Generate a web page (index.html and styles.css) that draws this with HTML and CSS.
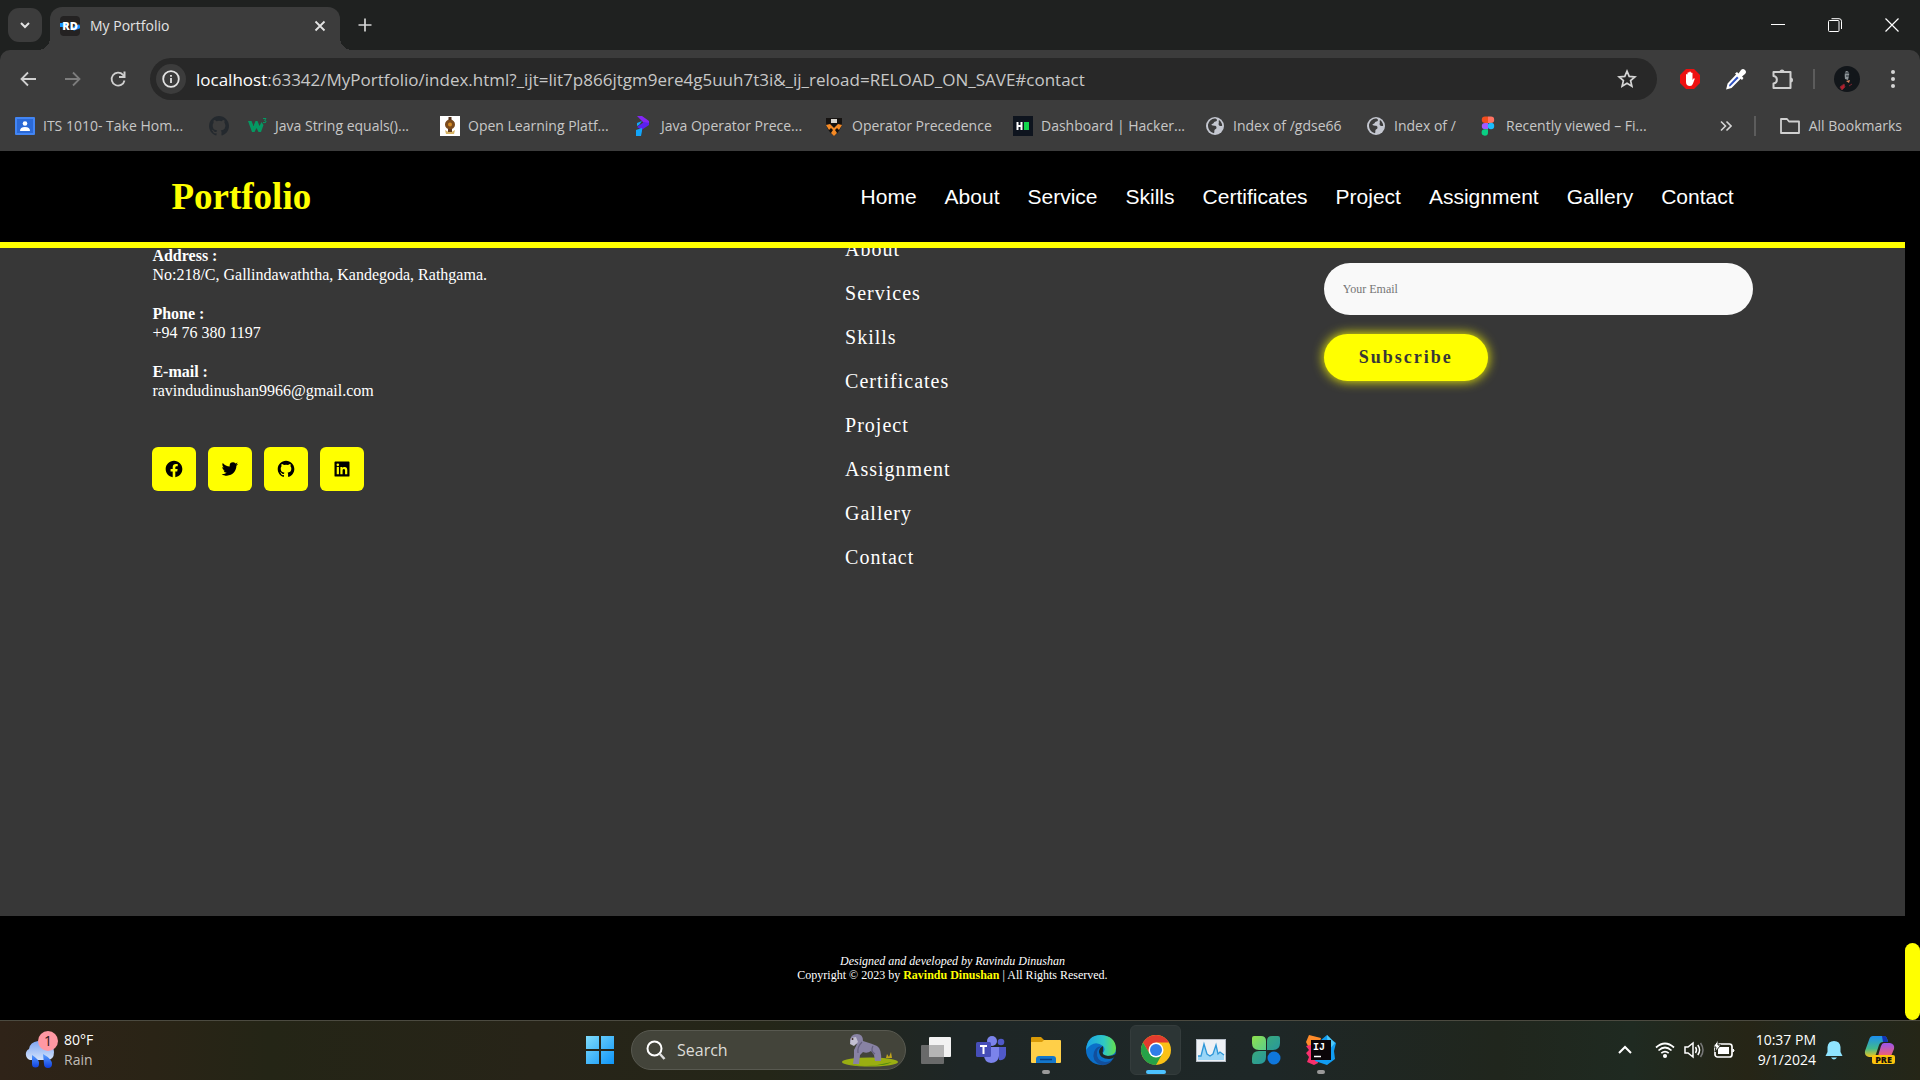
FILE: index.html
```html
<!DOCTYPE html>
<html lang="en">
<head>
<meta charset="utf-8">
<title>My Portfolio</title>
<link rel="stylesheet" href="styles.css">
</head>
<body>
<svg class="defs" aria-hidden="true">
  <symbol id="github" viewBox="0 0 24 24"><path fill="currentColor" d="M12.026 2c-5.509 0-9.974 4.465-9.974 9.974 0 4.406 2.857 8.145 6.821 9.465.499.09.679-.217.679-.481 0-.237-.008-.865-.011-1.696-2.775.602-3.361-1.338-3.361-1.338-.452-1.152-1.107-1.459-1.107-1.459-.905-.619.069-.605.069-.605 1.002.07 1.527 1.028 1.527 1.028.89 1.524 2.336 1.084 2.902.829.091-.645.351-1.085.635-1.334-2.214-.251-4.542-1.107-4.542-4.93 0-1.087.389-1.979 1.024-2.675-.101-.253-.446-1.268.099-2.64 0 0 .837-.269 2.742 1.021a9.582 9.582 0 0 1 2.496-.336 9.554 9.554 0 0 1 2.496.336c1.906-1.291 2.742-1.021 2.742-1.021.545 1.372.203 2.387.099 2.64.64.696 1.024 1.587 1.024 2.675 0 3.833-2.33 4.675-4.552 4.922.355.308.675.916.675 1.846 0 1.334-.012 2.41-.012 2.737 0 .267.178.577.687.479C19.146 20.115 22 16.379 22 11.974 22 6.465 17.535 2 12.026 2z"/></symbol>
  <symbol id="globe" viewBox="0 0 20 20"><circle cx="10" cy="10" r="9" fill="#c4c7d0"/><path fill="#3c3c3c" d="M3 8.500C4 5 6.500 2.800 9.500 2.600c1.500 0 2.500.600 2.500 1.500 0 1.200-1.300 1.400-2.300 1.700-.8.300-.7 1.200-1.500 1.700-.7.500-1.700.400-1.700 1.200 0 1.200 2.500.700 3.700 1.100 1.200.400 1.600 1.600 1.100 2.600-.5.900-1.700.800-1.900 1.900-.1.800.1 1.900-.4 2.900C5.600 16.600 2.700 13.500 3 8.500zM14 4c1.800 1.200 3.200 3.300 3.200 5.700-.9.500-2.300.400-3-.3-.8-.8-.7-1.800-.4-2.500.3-.8-.5-1.600.2-2.900z"/></symbol>
</svg>

<div class="tabs">
  <button class="tab-search" aria-label="Search tabs"><svg width="12" height="12" viewBox="0 0 12 12"><path d="M2 4l4 4 4-4" fill="none" stroke="#e3e3e3" stroke-width="2"/></svg></button>
  <div class="tab">
    <svg width="20" height="20" viewBox="0 0 20 20"><rect width="20" height="20" rx="4" fill="#242222"/><path d="M0 9h8M13 13l7-3" stroke="#1492ff" stroke-width="4"/><text x="10" y="14" text-anchor="middle" font-size="11" class="glyph">RD</text></svg>
    <span class="tab-title">My Portfolio</span>
    <button class="icon-btn" aria-label="Close tab"><svg width="12" height="12" viewBox="0 0 12 12"><path d="M1.500 1.500l9 9M10.500 1.500l-9 9" stroke="#e3e3e3" stroke-width="1.800"/></svg></button>
  </div>
  <button class="icon-btn new-tab" aria-label="New tab"><svg width="14" height="14" viewBox="0 0 14 14"><path d="M7 .5v13M.5 7h13" stroke="#d5d5d5" stroke-width="1.700"/></svg></button>
  <div class="window-controls">
    <button class="icon-btn" aria-label="Minimize"><svg width="14" height="14" viewBox="0 0 14 14"><path d="M0 6.500h14" stroke="#fff"/></svg></button>
    <button class="icon-btn" aria-label="Restore"><svg width="14" height="14" viewBox="0 0 14 14" fill="none" stroke="#fff"><rect x=".5" y="2.500" width="10.500" height="11" rx="1"/><path d="M3.500.7H11a2.500 2.500 0 0 1 2.500 2.500V11"/></svg></button>
    <button class="icon-btn" aria-label="Close"><svg width="14" height="14" viewBox="0 0 14 14"><path d="M.5.5l13 13M13.500.5l-13 13" stroke="#fff" stroke-width="1.200"/></svg></button>
  </div>
</div>

<div class="toolbar-wrap">
<div class="toolbar">
  <button class="icon-btn" aria-label="Back"><svg width="18" height="18" viewBox="0 0 18 18"><path d="M17 9H2.500M9 2.500L2.500 9l6.500 6.500" fill="none" stroke="#d0d0d0" stroke-width="1.800"/></svg></button>
  <button class="icon-btn" aria-label="Forward"><svg width="18" height="18" viewBox="0 0 18 18"><path d="M1 9h14.500M9 2.500L15.500 9 9 15.500" fill="none" stroke="#7d7d7d" stroke-width="1.800"/></svg></button>
  <button class="icon-btn" aria-label="Reload"><svg width="18" height="18" viewBox="0 0 18 18"><path d="M15.500 10.500A6.500 6.500 0 1 1 14 4.800l1 1.200" fill="none" stroke="#d0d0d0" stroke-width="1.800"/><path d="M16.500 1.500V8H10V6h4.500V1.500z" fill="#d0d0d0"/></svg></button>
  <div class="address-bar">
    <button class="site-info" aria-label="Site information"><svg width="18" height="18" viewBox="0 0 18 18"><circle cx="9" cy="9" r="7.800" fill="none" stroke="#e3e3e3" stroke-width="1.800"/><path d="M9 8v5M9 5v1.800" stroke="#e3e3e3" stroke-width="1.800"/></svg></button>
    <div class="url"><span class="host">localhost</span>:63342/MyPortfolio/index.html?_ijt=lit7p866jtgm9ere4g5uuh7t3i&amp;_ij_reload=RELOAD_ON_SAVE#contact</div>
    <button class="icon-btn star" aria-label="Bookmark this page"><svg width="20" height="20" viewBox="0 0 20 20"><path d="M10 2.200l2.200 5.200 5.700.500-4.300 3.700 1.300 5.600L10 14.200l-4.900 3 1.300-5.600L2.100 7.900l5.700-.5z" fill="none" stroke="#d5d5d5" stroke-width="1.700"/></svg></button>
  </div>
  <button class="icon-btn ext" aria-label="Ad blocker"><svg width="22" height="22" viewBox="0 0 22 22"><path d="M7 1h8l6 6v8l-6 6H7l-6-6V7z" fill="#ed1010"/><path d="M7 11V6.500q.8-1 1.500 0V10V4.800q.9-1 1.700 0V9V4q.9-1 1.700 0v5V5q.9-1 1.600 0v7l1-1.500q1-.5 1.300.3l-1.800 4.700Q13.200 18 11 18q-4 0-4-4z" fill="#fff"/></svg></button>
  <button class="icon-btn ext" aria-label="Color picker"><svg width="22" height="22" viewBox="0 0 22 22"><path d="M12 7l3 3-9 9-3.500 1 1-4z" fill="#2c4fc0" stroke="#fff" stroke-width="2"/><path d="M10 5.500l2-1.500 1.500 1.500L16 2q2-2 4 0t0 4l-3 2.500 1.500 1.500-1.500 2z" fill="#fff"/></svg></button>
  <button class="icon-btn ext" aria-label="Extensions"><svg width="22" height="22" viewBox="0 0 22 22"><path d="M2.500 4h17v16h-17v-4.500c4.500-.5 4.500-7 0-7.500z" fill="none" stroke="#d0d0d0" stroke-width="2" stroke-linejoin="round"/><path d="M8.500 4a2.500 2.500 0 0 1 5 0zM19.500 9.500a2.500 2.500 0 0 1 0 5z" fill="#d0d0d0"/></svg></button>
  <span class="bar-divider"></span>
  <button class="icon-btn profile" aria-label="Profile"><svg width="26" height="26" viewBox="0 0 26 26"><circle cx="13" cy="13" r="13" fill="#12161a"/><path d="M12 5q4 0 3 5l-1 4-3-1q-1-6 1-8z" fill="#8d9498"/><path d="M12 15l4-1-1 3z" fill="#d9825c"/><path d="M6 21l4-3 1 3-3 3zM15 20l3-2" fill="#b51e2c" stroke="#7a2630"/><path d="M11 7h4M12 10h3" stroke="#252b30"/></svg></button>
  <button class="icon-btn menu" aria-label="Menu"><svg width="6" height="20" viewBox="0 0 6 20" fill="#d5d5d5"><circle cx="3" cy="3" r="2"/><circle cx="3" cy="10" r="2"/><circle cx="3" cy="17" r="2"/></svg></button>
</div>
</div>

<div class="bookmarks">
  <nav class="bookmark-list" aria-label="Bookmarks">
    <a href="#"><svg width="20" height="20" viewBox="0 0 20 20"><rect y="1" width="20" height="18" rx="1" fill="#4285f4"/><rect x="2" y="3" width="16" height="14" fill="#2b69d6"/><circle cx="10" cy="7.500" r="2.300" fill="#fff"/><path d="M5 15q0-4 5-4t5 4z" fill="#fff"/></svg>ITS 1010- Take Hom...</a>
    <a href="#" aria-label="GitHub"><svg class="gh" width="24" height="24"><use href="#github"/></svg></a>
    <a href="#"><svg width="20" height="20" viewBox="0 0 20 20"><path d="M1 5h3.500l2 5 2-5h2l2 5 2-4 2 3-2.500 7h-2.500l-2-4-2 4H5z" fill="#059862"/><path d="M16 2.500h3l-1.500 2q2 0 1.500 1.500-.5 1-3 .5" fill="none" stroke="#059862"/></svg>Java String equals()...</a>
    <a href="#"><svg width="20" height="20" viewBox="0 0 20 20"><rect width="20" height="20" fill="#fff"/><circle cx="10" cy="8.500" r="5" fill="#7a4a1c"/><circle cx="10" cy="8.500" r="2" fill="#d28a25"/><path d="M8.500 1h3v3h-3z" fill="#51301a"/><path d="M5 14q5 4 10 0l-1 4H6z" fill="#d8b465"/><path d="M8 13h4v3H8z" fill="#5f3a20"/></svg>Open Learning Platf...</a>
    <a href="#"><svg width="20" height="20" viewBox="0 0 20 20"><path d="M4 0h5l7 5v3l-4 3-1-4z" fill="#8426f5"/><path d="M4 11l7-5 5 1v2l-6 4-1 1z" fill="#5a20f0"/><path d="M3 14l6-2v3l-1 5H3zM4 7l5-2-3 4-2 1z" fill="#12a5fa"/></svg>Java Operator Prece...</a>
    <a href="#"><svg width="20" height="20" viewBox="0 0 20 20"><path d="M2 2h16v5q-1 8-8 13Q3 15 2 7z" fill="#161311"/><path d="M7 3h6v4H7z" fill="#d5d2cc"/><path d="M2 9l4-1 4 4 4-4 4 1-3 5-2-2-2 2 2 3-3 3-3-3 2-3-2-2-2 2z" fill="#f58a25"/></svg>Operator Precedence</a>
    <a href="#"><svg width="20" height="20" viewBox="0 0 20 20"><rect width="20" height="20" fill="#0e141e"/><path d="M4.500 6v8M8.500 6v8M4 10h5" stroke="#fff" stroke-width="2"/><rect x="11" y="6" width="5" height="8" fill="#12d64c"/></svg>Dashboard | Hacker...</a>
    <a href="#"><svg width="20" height="20"><use href="#globe"/></svg>Index of /gdse66</a>
    <a href="#"><svg width="20" height="20"><use href="#globe"/></svg>Index of /</a>
    <a href="#"><svg width="20" height="20" viewBox="0 0 20 20"><path d="M10 .5H7a3.200 3.200 0 0 0 0 6.400h3z" fill="#f24e1e"/><path d="M10 .5h3a3.200 3.200 0 0 1 0 6.400h-3z" fill="#ff7262"/><path d="M10 6.900H7a3.200 3.200 0 0 0 0 6.400h3z" fill="#a259ff"/><circle cx="13" cy="10" r="3.200" fill="#1abcfe"/><path d="M10 13.300H7a3.200 3.200 0 1 0 3 3.200z" fill="#0acf83"/></svg>Recently viewed – Fi...</a>
  </nav>
  <button class="icon-btn more" aria-label="More bookmarks"><svg width="12" height="12" viewBox="0 0 12 12"><path d="M1 1.500L5.500 6 1 10.500M6.500 1.500L11 6l-4.500 4.500" fill="none" stroke="#d5d5d5" stroke-width="1.600"/></svg></button>
  <span class="bar-divider"></span>
  <a href="#" class="all"><svg width="20" height="20" viewBox="0 0 20 20"><path d="M1 3h6l2 2.500h10V17H1z" fill="none" stroke="#d0d0d0" stroke-width="1.800" stroke-linejoin="round"/></svg>All Bookmarks</a>
</div>

<div class="viewport">
  <div class="page">
    <header class="site-header">
      <a class="logo" href="#">Portfolio</a>
      <nav class="site-nav">
        <a href="#">Home</a><a href="#">About</a><a href="#">Service</a><a href="#">Skills</a><a href="#">Certificates</a><a href="#">Project</a><a href="#">Assignment</a><a href="#">Gallery</a><a href="#">Contact</a>
      </nav>
    </header>
    <main class="contact">
      <section class="details">
        <p><b>Address :</b><br>No:218/C, Gallindawaththa, Kandegoda, Rathgama.</p>
        <p><b>Phone :</b><br>+94 76 380 1197</p>
        <p><b>E-mail :</b><br>ravindudinushan9966@gmail.com</p>
        <div class="social">
          <a href="#" aria-label="Facebook"><svg width="20" height="20" viewBox="0 0 24 24"><path d="M12.001 2.002c-5.522 0-9.999 4.477-9.999 9.999 0 4.990 3.656 9.126 8.437 9.879v-6.988h-2.540v-2.891h2.540V9.798c0-2.508 1.493-3.891 3.776-3.891 1.094 0 2.240.195 2.240.195v2.459h-1.264c-1.240 0-1.628.772-1.628 1.563v1.875h2.771l-.443 2.891h-2.328v6.988C18.344 21.129 22 16.992 22 12.001c0-5.522-4.477-9.999-9.999-9.999z"/></svg></a>
          <a href="#" aria-label="Twitter"><svg width="20" height="20" viewBox="0 0 24 24"><path d="M19.633 7.997c.013.175.013.349.013.523 0 5.325-4.053 11.461-11.460 11.461-2.282 0-4.402-.661-6.186-1.809.324.037.636.050.973.050a8.070 8.070 0 0 0 5.001-1.721 4.036 4.036 0 0 1-3.767-2.793c.249.037.499.062.761.062.361 0 .724-.050 1.061-.137a4.027 4.027 0 0 1-3.230-3.953v-.050c.537.299 1.160.486 1.820.511a4.022 4.022 0 0 1-1.796-3.354c0-.748.199-1.434.548-2.032a11.457 11.457 0 0 0 8.306 4.215c-.062-.3-.1-.611-.1-.923a4.026 4.026 0 0 1 4.028-4.028c1.160 0 2.207.486 2.943 1.272a7.957 7.957 0 0 0 2.556-.973 4.020 4.020 0 0 1-1.771 2.220 8.073 8.073 0 0 0 2.319-.624 8.645 8.645 0 0 1-2.019 2.083z"/></svg></a>
          <a href="#" aria-label="GitHub"><svg width="20" height="20"><use href="#github"/></svg></a>
          <a href="#" aria-label="LinkedIn"><svg width="20" height="20" viewBox="0 0 24 24"><path d="M20 3H4a1 1 0 0 0-1 1v16a1 1 0 0 0 1 1h16a1 1 0 0 0 1-1V4a1 1 0 0 0-1-1zM8.339 18.337H5.667v-8.590h2.672v8.590zM7.003 8.574a1.548 1.548 0 1 1 0-3.096 1.548 1.548 0 0 1 0 3.096zm11.335 9.763h-2.669V14.160c0-.996-.018-2.277-1.388-2.277-1.390 0-1.601 1.086-1.601 2.207v4.248h-2.667v-8.590h2.560v1.174h.037c.355-.675 1.227-1.387 2.524-1.387 2.704 0 3.203 1.778 3.203 4.092v4.710z"/></svg></a>
        </div>
      </section>
      <ul class="links">
        <li><a href="#">About</a></li><li><a href="#">Services</a></li><li><a href="#">Skills</a></li><li><a href="#">Certificates</a></li><li><a href="#">Project</a></li><li><a href="#">Assignment</a></li><li><a href="#">Gallery</a></li><li><a href="#">Contact</a></li>
      </ul>
      <form class="newsletter">
        <input type="email" placeholder="Your Email" aria-label="Your Email">
        <button type="button">Subscribe</button>
      </form>
    </main>
    <footer class="site-footer">
      <i>Designed and developed by Ravindu Dinushan</i>
      <span>Copyright © 2023 by <b>Ravindu Dinushan</b> | All Rights Reserved.</span>
    </footer>
  </div>
  <div class="scrollbar"><div class="thumb"></div></div>
</div>

<div class="taskbar">
  <div class="weather">
    <svg width="36" height="38" viewBox="0 0 36 38"><defs><linearGradient id="cl" x1="0" y1="0" x2="0" y2="1"><stop offset="0" stop-color="#7ea5f2"/><stop offset="1" stop-color="#d3e2fb"/></linearGradient><linearGradient id="dr" x1="0" y1="0" x2="0" y2="1"><stop offset="0" stop-color="#5aa0ff"/><stop offset="1" stop-color="#0f3fe0"/></linearGradient></defs><path d="M6 29a6 6 0 0 1-1-11q1-7 9-8h9q7 3 7 11 0 8-7 8z" fill="url(#cl)"/><path d="M8 24q8 5 7 9a3.500 3.500 0 0 1-7 0zM19 23q9 5 9 10a4 4 0 0 1-8 0z" fill="url(#dr)"/><circle cx="24" cy="10" r="10" fill="#ff98a3"/><text x="24" y="15" text-anchor="middle" font-size="14" class="badge">1</text></svg>
    <div>80°F<br><span class="dim">Rain</span></div>
  </div>
  <div class="apps">
    <button class="app" aria-label="Start"><svg width="30" height="30" viewBox="0 0 30 30"><defs><linearGradient id="win" x1="0" y1="0" x2="1" y2="1"><stop offset="0" stop-color="#7fdcfb"/><stop offset="1" stop-color="#0e95f8"/></linearGradient></defs><path fill="url(#win)" d="M1 1h13v13H1zM16 1h13v13H16zM1 16h13v13H1zM16 16h13v13H16z"/></svg></button>
    <button class="search"><svg width="20" height="20" viewBox="0 0 20 20"><circle cx="8.500" cy="8.500" r="7" fill="none" stroke="#fff" stroke-width="2"/><path d="M13.500 13.500L18.500 19" stroke="#ddd" stroke-width="2.500"/></svg><span>Search</span>
      <svg class="gorilla" width="56" height="34" viewBox="0 0 56 34"><ellipse cx="28" cy="29" rx="28" ry="4.500" fill="#9aae12"/><path d="M6 31q22 4 44-2-10 6-44 2z" fill="#4d8a10"/><path d="M44 25l1-4 2 3 2-5 1 6" fill="#c3a51c"/><path d="M8 9q0-8 7-8 6 0 6 7 10 3 14 5 5 3 4 15h-6l-1-6-3-4q-4 3-8 1l-3 3-1 9h-6l1-8 0-6 3-6q-5 1-7-2z" fill="#8882a4"/><path d="M20 9q-5 5-4 11M31 13q-3 5 2 8" fill="none" stroke="#65607f" stroke-width="1.200"/><path d="M9 5l5-1 2 5-4 4-4-2z" fill="#c3c0d2"/><circle cx="10.500" cy="6" r="1" fill="#402c2c"/></svg></button>
    <button class="app" aria-label="Task view"><svg width="32" height="32" viewBox="0 0 32 32"><rect x="9" y="3" width="22" height="20" rx="1" fill="#f2f2f2"/><rect x="1" y="11" width="23" height="19" rx="1" fill="#777" opacity=".85"/><path d="M9 11h15v12H9z" fill="#b5b5b5"/></svg></button>
    <button class="app" aria-label="Teams"><svg width="32" height="32" viewBox="0 0 32 32"><circle cx="17" cy="7" r="5" fill="#7b83eb"/><circle cx="26" cy="8" r="3.300" fill="#5059c9"/><path d="M22 13h9v8q-1 6-7 5z" fill="#5059c9"/><path d="M9 13h15v9q-1 7-8 7-7-1-7-8z" fill="#7b83eb"/><rect x="1" y="8" width="15" height="15" rx="1.500" fill="#464eb8"/><path d="M5 12h7M8.500 12v8" stroke="#fff" stroke-width="2"/></svg></button>
    <button class="app open" aria-label="File Explorer"><svg width="32" height="32" viewBox="0 0 32 32"><path d="M1 4q0-1 1-1h9l3 3h0v6H1z" fill="#d99a07"/><path d="M1 8h11l2-2h16q1 0 1 1v21q0 1-1 1H2q-1 0-1-1z" fill="#ffcf48"/><path d="M6 29v-4q0-3 3-3h14q3 0 3 3v4z" fill="#1477cb"/><path d="M10 25.500h12" stroke="#073e83" stroke-width="1.500"/></svg></button>
    <button class="app" aria-label="Edge"><svg width="32" height="32" viewBox="0 0 32 32"><defs><linearGradient id="e1" x1="0" y1="0" x2="1" y2="0"><stop offset="0" stop-color="#1aa3e8"/><stop offset=".6" stop-color="#2fc8c4"/><stop offset="1" stop-color="#65e04a"/></linearGradient></defs><circle cx="16" cy="16" r="15" fill="#0b6fc9"/><path d="M1 16Q2 1 16 1q14 1 15 13 0 8-9 8-5 0-4-3 3-4 0-7Q9 5 1 16z" fill="url(#e1)"/><path d="M18 13q-5 0-6 5-1 9 8 10 5 0 8-3-4 7-12 6Q6 27 9 18q3-7 9-5z" fill="#124f9c"/><path d="M18 12q-4 2-4 6 1 7 10 7 3 0 6-2l1-3q-3 2-8 2-7-1-5-5z" fill="#1f2727"/></svg></button>
    <button class="app active" aria-label="Chrome"><svg width="32" height="32" viewBox="0 0 32 32"><circle cx="16" cy="16" r="15" fill="#fbc116"/><path d="M3 8.500A15 15 0 0 1 29 8.500H16l-6.500 11z" fill="#e33b2e"/><path d="M3 8.500A15 15 0 0 0 16 31l6.500-11.500h-13z" fill="#26a148"/><circle cx="16" cy="16" r="7.500" fill="#fff"/><circle cx="16" cy="16" r="6" fill="#2f7de9"/></svg></button>
    <button class="app" aria-label="Performance monitor"><svg width="32" height="32" viewBox="0 0 32 32"><rect x="1.500" y="5.500" width="29" height="22" fill="#eef1f5" stroke="#b4bbc4"/><path d="M3 26v-4h3l3-12 3 10 3 2 3-2 3-9 2 9 2-2 4 3v5z" fill="#9bd6f7"/><path d="M3 22h3l3-12 3 10 3 2 3-2 3-9 2 9 2-2 4 3" fill="none" stroke="#2f97d8" stroke-width="1.300"/></svg></button>
    <button class="app" aria-label="Workspace"><svg width="32" height="32" viewBox="0 0 32 32"><defs><linearGradient id="g1" x1="0" y1="0" x2="1" y2="1"><stop offset="0" stop-color="#8fdf4c"/><stop offset="1" stop-color="#5ccf8a"/></linearGradient><linearGradient id="g2" x1="0" y1="0" x2="1" y2="1"><stop offset="0" stop-color="#43b26a"/><stop offset="1" stop-color="#1e8fae"/></linearGradient></defs><path d="M4 2h7q5 0 5 5v9H9q-7 0-7-7V4q0-2 2-2z" fill="url(#g1)"/><path d="M30 4v5q0 7-7 7h-6V7q0-5 5-5h6q2 0 2 2zM2 28v-4q0-7 7-7h7v6q0 7-7 7H4q-2 0-2-2z" fill="url(#g2)"/><circle cx="24" cy="24" r="6.500" fill="#0f77dc"/></svg></button>
    <button class="app open" aria-label="IntelliJ IDEA"><svg width="32" height="32" viewBox="0 0 32 32"><path d="M4 1l12 3-3 12L4 14 1 8z" fill="#ff8b2a"/><path d="M1 12l9-2 3 19-4 2-7-3 2-5-3-4 3-3z" fill="#f9306d"/><path d="M16 6l6-5 5 5 4 3-2 8 1 8-8 6-12-4z" fill="#119df2"/><path d="M22 1l8 8-7 8z" fill="#4fc8f7"/><rect x="6" y="6" width="20" height="20" fill="#0b0508"/><text x="8" y="16" font-size="10" class="glyph mono">IJ</text><path d="M9 22.500h7" stroke="#fff" stroke-width="1.500"/></svg></button>
  </div>
  <div class="tray">
    <button class="icon-btn up" aria-label="Hidden icons"><svg width="16" height="10" viewBox="0 0 16 10"><path d="M2 8l6-6 6 6" fill="none" stroke="#fff" stroke-width="2"/></svg></button>
    <svg width="20" height="20" viewBox="0 0 20 20" fill="none" stroke="#fff" stroke-width="1.700"><path d="M1 7.500q9-8 18 0M3.500 10.500q6.500-6 13 0M6.300 13.200q3.700-3 7.400 0"/><circle cx="10" cy="16" r="1.200" fill="#fff"/></svg>
    <svg width="20" height="20" viewBox="0 0 20 20" fill="none" stroke="#fff" stroke-width="1.500"><path d="M1 7h3l5-4v14l-5-4H1zM11.500 7q2 3 0 6M13.800 5q3.600 5 0 10"/><path d="M16.500 3q5 7 0 14" stroke="#777"/></svg>
    <svg width="22" height="20" viewBox="0 0 22 20"><rect x="2" y="4" width="17" height="13" rx="2.500" fill="none" stroke="#fff" stroke-width="1.700"/><path d="M5 7h11v7H5z" fill="#fff"/><path d="M20 9q2 1.500 0 3z" fill="#fff" stroke="#fff"/><path d="M5 0L0 7h3l-1 5 6-7H5z" fill="#fff" stroke="#22251a"/></svg>
    <div class="clock">10:37 PM<br>9/1/2024</div>
    <svg width="18" height="20" viewBox="0 0 18 20"><path d="M9 1q6 0 6.500 6v5l2 4H.5l2-4V7Q3 1 9 1zM6 17.500h6q-3 4-6 0z" fill="#8fe4ff"/></svg>
    <svg class="copilot" width="32" height="32" viewBox="0 0 32 32"><defs><linearGradient id="c1" x1="0" y1="0" x2="0" y2="1"><stop offset="0" stop-color="#1c8ff0"/><stop offset=".6" stop-color="#42b98c"/><stop offset="1" stop-color="#f3c51b"/></linearGradient><linearGradient id="c2" x1="0" y1="0" x2="0" y2="1"><stop offset="0" stop-color="#9a55ef"/><stop offset="1" stop-color="#f2606e"/></linearGradient></defs><path d="M9 2h11q3 0 4 6h-5q-3 0-4 3l-3 9q-1 3-4 3H5q-5-1-4-6l4-11q1-4 4-4z" fill="url(#c1)"/><path d="M18 2h3q2 1 3 6h-5z" fill="#1233b4"/><path d="M20 9h6q5 1 4 6l-3 7H14l3-10q1-3 3-3z" fill="url(#c2)"/><rect x="8" y="21" width="23" height="9" rx="2" fill="#fcc40c"/><text x="19.500" y="29" text-anchor="middle" font-size="9" class="pre">PRE</text></svg>
  </div>
</div>
</body>
</html>
```
FILE: styles.css
```css
* { box-sizing: border-box; }
body {
  margin: 0;
  min-height: 100vh;
  display: flex;
  flex-direction: column;
  background: #000;
  color: #fff;
  font-family: "Open Sans", "Noto Sans", sans-serif;
  font-size: 14px;
}
a { color: inherit; text-decoration: none; }
svg { flex: none; display: block; }
button { border: 0; padding: 0; font: inherit; color: inherit; background: none; }
.defs { position: absolute; width: 0; height: 0; }
.icon-btn { display: flex; align-items: center; justify-content: center; height: 36px; }
.glyph { fill: #fff; font-family: "Open Sans", sans-serif; font-weight: 800; }
.mono { font-family: "Liberation Mono", monospace; }
.badge { fill: #2b1618; font-family: "Open Sans", sans-serif; }
.pre { fill: #17130a; font-family: "Open Sans", sans-serif; font-weight: 800; }

/* Browser tab strip */
.tabs { display: flex; align-items: center; height: 50px; padding-left: 8px; background: #1f2120; }
.tab-search {
  display: flex; align-items: center; justify-content: center;
  width: 34px; height: 34px; border-radius: 11px; background: #3c3c3c;
}
.tab {
  position: relative;
  display: flex; align-items: center; gap: 10px; align-self: flex-end;
  width: 290px; height: 43px; margin-left: 8px; padding: 0 14px 6px 10px;
  border-radius: 12px 12px 0 0; background: #3c3c3c; color: #e3e3e3;
}
/* Curved feet of the active tab */
.tab::before, .tab::after { content: ""; position: absolute; bottom: 0; width: 12px; height: 12px; }
.tab::before { right: 100%; background: radial-gradient(circle at 0 0, transparent 12px, #3c3c3c 12px); }
.tab::after { left: 100%; background: radial-gradient(circle at 100% 0, transparent 12px, #3c3c3c 12px); }
.tab-title { flex: 1; }
.new-tab { width: 50px; }
.window-controls { display: flex; margin-left: auto; }
.window-controls .icon-btn { width: 57px; }

/* Toolbar */
.toolbar-wrap { background: #1f2120; }
.toolbar {
  display: flex; align-items: center; height: 58px; padding: 0 6px 0 5px;
  background: #3c3c3c; border-radius: 10px 10px 0 0;
}
.toolbar > .icon-btn { width: 45px; }
.toolbar > .ext { width: 46px; }
.toolbar > .profile { width: 48px; }
.toolbar > .menu { width: 43px; }
.address-bar {
  display: flex; align-items: center; flex: 1; height: 42px;
  margin: 0 10px; padding: 0 12px 0 4px; border-radius: 21px; background: #282828;
}
.site-info {
  display: flex; align-items: center; justify-content: center;
  width: 30px; height: 30px; margin: 0 10px 0 2px; border-radius: 50%; background: #3c3c3c;
}
.url { flex: 1; font-size: 17px; color: #c7c7c7; white-space: nowrap; }
.host { color: #fff; }
.star { width: 36px; }
.bar-divider { width: 2px; height: 20px; margin: 0 8px; background: #5c5c5c; }

/* Bookmarks */
.bookmarks {
  display: flex; align-items: center; height: 43px; padding: 0 18px 8px 15px;
  background: #3c3c3c; color: #c7c7c7; white-space: nowrap;
}
.bookmark-list {
  display: grid; flex: 1;
  grid-template-columns: 192px 40px 193px 193px 191px 189px 192px 161px 112px 1fr;
}
.bookmarks a { display: flex; align-items: center; gap: 8px; }
.gh { color: #24292e; }
.more { width: 40px; }
.bookmarks .all { padding-left: 16px; gap: 9px; }

/* Portfolio page */
.viewport { display: flex; flex: 1; }
.page {
  display: flex; flex: 1; flex-direction: column; background: #373737;
  font-family: "Liberation Serif", "Times New Roman", serif;
}
.site-header {
  display: flex; align-items: center; justify-content: space-between;
  height: 97px; padding: 0 9%; background: #000; border-bottom: 6px solid #ff0;
}
.logo { font-size: 37px; font-weight: bold; color: #ff0; }
.site-nav { display: flex; gap: 28px; font: 21px "Liberation Sans", Arial, sans-serif; }
.contact {
  display: grid; flex: 1; grid-template-columns: 693fr 479fr 429fr;
  padding: 0 8%; overflow: hidden;
}
.details { margin-top: -2px; }
.details p { margin: 0 0 20px; font-size: 16px; line-height: 19px; }
.social { display: flex; gap: 12px; margin-top: 47px; }
.social a {
  display: flex; align-items: center; justify-content: center;
  width: 44px; height: 44px; border-radius: 6px; background: #ff0; color: #000;
}
/* The list is scrolled partly under the header */
.links { margin: -21px 0 0; padding: 0; list-style: none; font-size: 20px; line-height: 44px; letter-spacing: 1px; }
.newsletter { display: flex; flex-direction: column; align-items: flex-start; gap: 19px; padding-top: 15px; }
.newsletter input {
  width: 100%; height: 52px; padding: 0 19px; border: 0; border-radius: 26px;
  background: #f9f9f9; font: 12px "Liberation Serif", "Times New Roman", serif;
}
.newsletter input::placeholder { color: #757575; }
.newsletter button {
  height: 47px; padding: 0 35px; border-radius: 24px; background: #ff0; color: #373737;
  box-shadow: 0 0 12px #ff0; font: bold 18px "Liberation Serif", "Times New Roman", serif; letter-spacing: 2px;
}
.site-footer {
  display: flex; flex-direction: column; align-items: center; justify-content: center;
  height: 104px; background: #000; font-size: 12px; line-height: 14px;
}
.site-footer b { color: #ff0; }
.scrollbar { display: flex; align-items: flex-end; width: 15px; background: #000; }
.thumb { width: 15px; height: 77px; border-radius: 8px; background: #ff0; }

/* Taskbar */
.taskbar {
  display: grid; grid-template-columns: 1fr auto 1fr; align-items: center; height: 60px;
  padding-bottom: 1px; border-top: 1px solid #4b4a40;
  background: linear-gradient(90deg, #2f2318, #2a2416 8%, #242516 14%, #272418 28%, #242618 40%, #1e2626 50%, #1e2727 66%, #20261d 78%, #1f2a21 85%, #262516 91%, #1f2720 95%, #252617);
}
.weather { display: flex; align-items: center; gap: 4px; padding-left: 24px; line-height: 20px; }
.dim { color: #c0bdb8; }
.apps { display: flex; align-items: center; }
.app {
  position: relative; display: flex; align-items: center; justify-content: center;
  width: 55px; height: 50px;
}
.active::before {
  content: ""; position: absolute; inset: 0 2px; border: 1px solid #343c3c; border-radius: 6px; background: #2c3535;
}
.active svg { position: relative; }
.open::after, .active::after {
  content: ""; position: absolute; bottom: 1px; width: 8px; height: 4px; border-radius: 2px; background: #999;
}
.active::after { width: 20px; background: #4cc2ff; }
.search {
  display: flex; align-items: center; gap: 11px; width: 275px; height: 40px; margin: 0 2px 0 4px;
  padding: 0 7px 0 14px; border: 1px solid #585950; border-radius: 20px; background: #43443a;
  color: #dcdcd8; font-size: 16px;
}
.gorilla { margin-left: auto; }
.tray { display: flex; align-items: center; justify-content: flex-end; gap: 9px; padding-right: 24px; }
.up { width: 30px; margin-right: 6px; }
.clock { margin-left: 12px; text-align: right; line-height: 20px; }
.copilot { margin-left: 12px; }
```
